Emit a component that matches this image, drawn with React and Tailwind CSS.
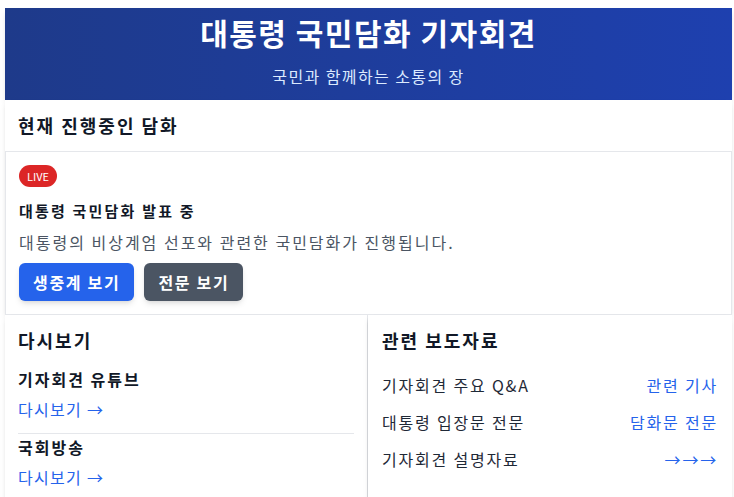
import React from 'react';

const App = () => {
    const pressLinks = [
        { title: '기자회견 주요 Q&A', link: '관련 기사' },
        { title: '대통령 입장문 전문', link: '담화문 전문' },
        { title: '기자회견 설명자료', link: '→→→' },
    ];

    return (
        <div className="min-h-screen bg-white font-['Noto_Sans_CJK_KR',sans-serif] tracking-[2px] text-[#1f2937]">
            <div className="ml-[5px] mt-2 w-[727px]">
                {/* Header */}
                <header className="h-[92px] bg-gradient-to-r from-[#1e3a8a] to-[#1e40af] text-white text-center pt-[4px] shadow-md">
                    <h1 className="text-[30px] font-bold leading-[40px] tracking-[1.5px]">대통령 국민담화 기자회견</h1>
                    <p className="mt-[12px] text-[16px] leading-[24px] tracking-[1.4px] text-[#dbeafe]">국민과 함께하는 소통의 장</p>
                </header>

                {/* Current */}
                <section className="bg-white shadow-md">
                    <h2 className="h-[51px] px-[13px] flex items-center text-[18px] font-bold text-[#111827]">
                        현재 진행중인 담화
                    </h2>
                    <div className="border border-[#e5e7eb] px-[13px] pt-[13px] pb-[13px]">
                        <div className="flex">
                            <span className="bg-[#dc2626] text-white text-[11px] leading-[22px] px-[8px] tracking-normal rounded-full">
                                LIVE
                            </span>
                        </div>
                        <h3 className="mt-[12px] text-[15px] leading-[24px] font-bold text-[#111827] tracking-[2.2px]">
                            대통령 국민담화 발표 중
                        </h3>
                        <p className="mt-[7px] text-[16px] leading-[24px] text-[#4b5563]">
                            대통령의 비상계엄 선포와 관련한 국민담화가 진행됩니다.
                        </p>
                        <div className="mt-[9px] flex gap-[10px]">
                            <button className="h-[38px] px-[14px] rounded-md bg-[#2563eb] text-white font-bold text-[16px] tracking-[1.7px] shadow-md">
                                생중계 보기
                            </button>
                            <button className="h-[38px] px-[14px] rounded-md bg-[#4b5563] text-white font-bold text-[16px] tracking-[1.7px] shadow-md">
                                전문 보기
                            </button>
                        </div>
                    </div>
                </section>

                {/* Bottom */}
                <div className="grid grid-cols-[362px_1fr] gap-[1px] bg-[#e5e7eb]">
                    <div className="bg-white px-[13px] pt-[11px] pb-[20px] shadow-md">
                        <h2 className="text-[18px] leading-[28px] font-bold text-[#111827]">다시보기</h2>
                        <div className="mt-[13px] pb-[12px] border-b border-[#e5e7eb]">
                            <h3 className="text-[16px] leading-[24px] font-semibold text-[#111827]">기자회견 유튜브</h3>
                            <a className="block mt-[6px] text-[16px] leading-[24px] tracking-[1.3px] text-[#2563eb]">다시보기 →</a>
                        </div>
                        <div className="pt-[1px]">
                            <h3 className="text-[16px] leading-[24px] font-semibold text-[#111827]">국회방송</h3>
                            <a className="block mt-[6px] text-[16px] leading-[24px] tracking-[1.3px] text-[#2563eb]">다시보기 →</a>
                        </div>
                    </div>
                    <div className="bg-white px-[14px] pt-[11px] pb-[20px] shadow-md">
                        <h2 className="text-[18px] leading-[28px] font-bold text-[#111827]">관련 보도자료</h2>
                        <ul className="mt-[19px] flex flex-col gap-[13px]">
                            {pressLinks.map((item) => (
                                <li key={item.title} className="flex justify-between text-[16px] leading-[24px] tracking-[1.8px]">
                                    <span className="text-[#1f2937]">{item.title}</span>
                                    <a className="text-[#2563eb]">{item.link}</a>
                                </li>
                            ))}
                        </ul>
                    </div>
                </div>
            </div>
        </div>
    );
};

export default App;
